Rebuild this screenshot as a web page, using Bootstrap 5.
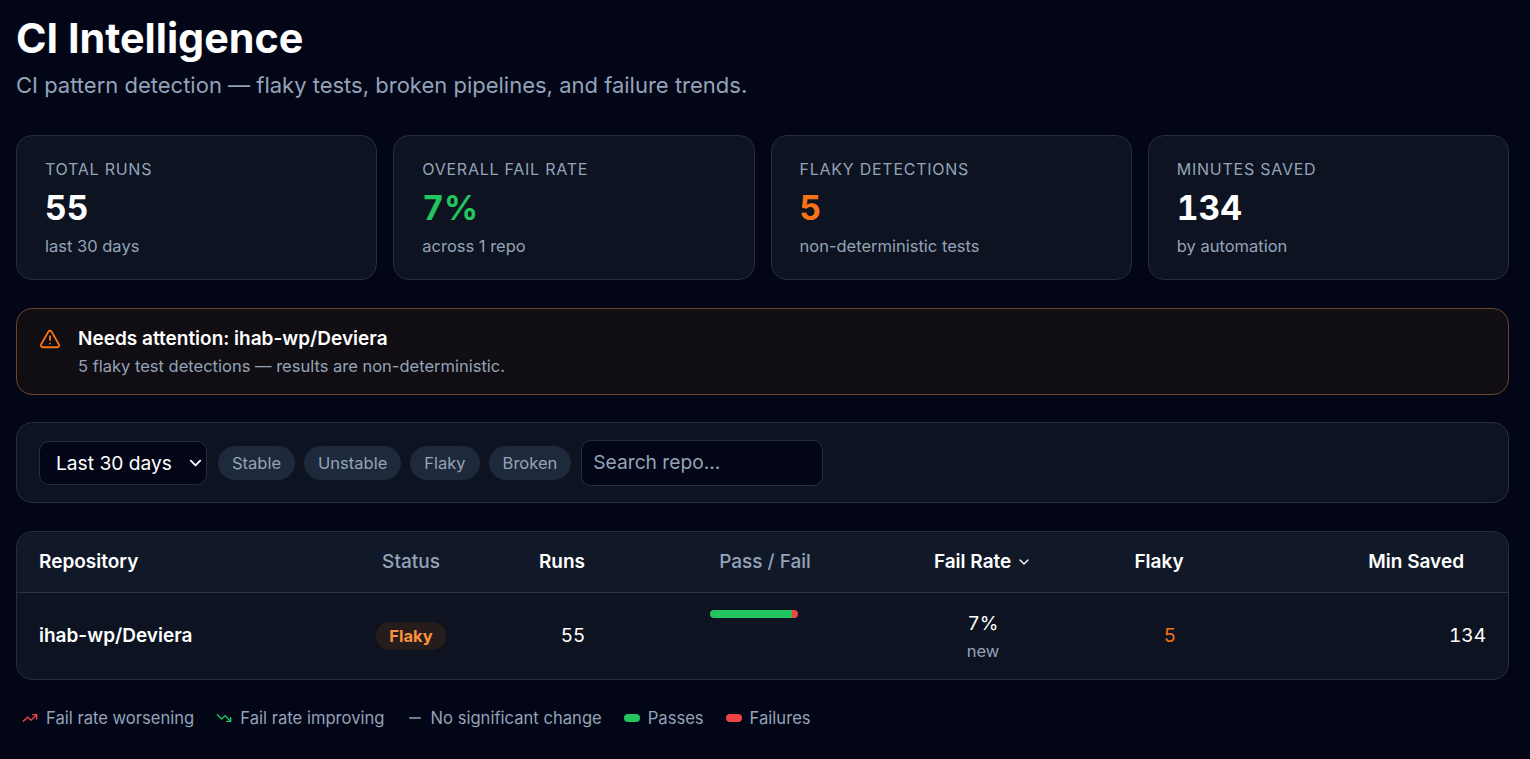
<!DOCTYPE html>
<html lang="en" data-bs-theme="dark">
<head>
  <meta charset="UTF-8" />
  <meta name="viewport" content="width=device-width, initial-scale=1" />
  <title>CI Intelligence</title>
  <link href="https://cdn.jsdelivr.net/npm/bootstrap@5.3.0/dist/css/bootstrap.min.css" rel="stylesheet" />
  <style>
    body { background: #020617; color: #fff; font-family: Inter, "Liberation Sans", sans-serif; overflow: hidden; }
    .page { padding: 16px 21px 0 16px; }
    .page-title { font-size: 41.3px; font-weight: 700; line-height: 44px; margin: 0 0 9px; }
    .page-sub { font-size: 22px; line-height: 32px; color: #94a3b8; margin: 0 0 34px; }
    .panel { background: #0d1321; border: 1px solid #252e3f; border-radius: 16px; }
    .stats { display: grid; grid-template-columns: repeat(4, 1fr); gap: 16px; margin-bottom: 28px; }
    .stat { padding: 23px 28px 22px; height: 145px; }
    .stat-label { font-size: 16px; line-height: 20px; letter-spacing: .75px; color: #94a3b8; text-transform: uppercase; }
    .stat-value { font-size: 33.6px; line-height: 44px; font-weight: 700; margin-top: 7px; font-variant-numeric: tabular-nums; }
    .stat-sub { font-size: 16.5px; line-height: 22px; color: #94a3b8; margin-top: 5px; }
    .text-good { color: #22c55e; }
    .text-warn { color: #f97316; }
    .attention { background: #110e13; border: 1px solid #6b4530; border-radius: 16px; padding: 17px 22px 16px; height: 87px; margin-bottom: 27px; gap: 17px; }
    .attention svg { margin-top: 2px; flex: none; }
    .attention-title { font-size: 19px; line-height: 26px; font-weight: 600; }
    .attention-sub { font-size: 16.5px; line-height: 24px; color: #94a3b8; margin-top: 2px; }
    .filters { height: 81px; padding: 0 22px; gap: 9px; margin-bottom: 28px; }
    .filters .form-select { width: 168px; height: 44px; background-color: #020617; border-color: #252e3f; border-radius: 10px; color: #fff; font-size: 19.2px; padding: 1px 30px 0 16px; margin-right: 2px;
      background-image: url("data:image/svg+xml,%3csvg xmlns='http://www.w3.org/2000/svg' viewBox='0 0 16 16'%3e%3cpath fill='none' stroke='%23fff' stroke-linecap='round' stroke-linejoin='round' stroke-width='2' d='m3 6 5 5 5-5'/%3e%3c/svg%3e"); background-position: right 3px center; background-size: 15px; }
    .chip { background: #1e293b; color: #94a3b8; border-radius: 17px; height: 34px; padding: 0 14px; font-size: 16.5px; line-height: 34px; border: 0; }
    .filters .form-control { width: 242px; height: 46px; background: #020617; border-color: #252e3f; border-radius: 10px; color: #fff; font-size: 19.2px; padding: 0 11px 2px; margin-left: 1px; }
    .filters .form-control::placeholder { color: #94a3b8; opacity: 1; }
    .repo-panel { overflow: hidden; margin-bottom: 28px; }
    .repo-table { table-layout: fixed; width: 100%; margin: 0; --bs-table-bg: transparent; --bs-table-color: #fff; --bs-table-border-color: transparent; }
    .repo-table th { background: #111827; height: 60px; padding: 0 22px; font-size: 19px; font-weight: 600; vertical-align: middle; border-bottom: 1px solid #2a3446; }
    .repo-table td { height: 87px; padding: 0 22px; font-size: 19px; vertical-align: middle; border: 0; }
    .repo-table td.num { font-variant-numeric: tabular-nums; }
    .repo-table th.muted { color: #94a3b8; font-weight: 500; }
    .sort-gap { padding-right: 22px; }
    .repo-name { font-weight: 600; }
    .pill-flaky { display: inline-block; background: #271c1c; color: #fb923c; border-radius: 14px; height: 28px; line-height: 28px; padding: 0 13.5px; font-size: 16.5px; font-weight: 700; }
    .bar-wrap { display: flex; justify-content: center; padding-right: 22px; }
    .bar { display: flex; width: 88px; height: 8px; border-radius: 4px; overflow: hidden; }
    .bar-pass { background: #22c55e; }
    .bar-fail { background: #ef4444; flex: 1; }
    td.bar-cell { vertical-align: top; padding-top: 17px; }
    .rate-sub { font-size: 16.5px; line-height: 22px; color: #94a3b8; margin-top: 1px; }
    .legend { font-size: 16.6px; line-height: 20px; color: #94a3b8; gap: 22px; padding-left: 6px; }
    .legend-dot { display: inline-block; width: 16px; height: 8px; border-radius: 4px; flex: none; }
  </style>
</head>
<body>

<div class="page">
  <h1 class="page-title">CI Intelligence</h1>
  <p class="page-sub">CI pattern detection — flaky tests, broken pipelines, and failure trends.</p>

  <div class="stats">
    <div class="panel stat">
      <div class="stat-label">Total Runs</div>
      <div class="stat-value">55</div>
      <div class="stat-sub">last 30 days</div>
    </div>
    <div class="panel stat">
      <div class="stat-label">Overall Fail Rate</div>
      <div class="stat-value text-good">7%</div>
      <div class="stat-sub">across 1 repo</div>
    </div>
    <div class="panel stat">
      <div class="stat-label">Flaky Detections</div>
      <div class="stat-value text-warn">5</div>
      <div class="stat-sub">non-deterministic tests</div>
    </div>
    <div class="panel stat">
      <div class="stat-label">Minutes Saved</div>
      <div class="stat-value">134</div>
      <div class="stat-sub">by automation</div>
    </div>
  </div>

  <div class="attention d-flex">
    <svg width="22" height="22" viewBox="0 0 24 24" fill="none" stroke="#f97316" stroke-width="2" stroke-linecap="round" stroke-linejoin="round">
      <path d="m21.73 18-8-14a2 2 0 0 0-3.48 0l-8 14A2 2 0 0 0 4 21h16a2 2 0 0 0 1.73-3Z"/>
      <path d="M12 9v4"/>
      <path d="M12 17h.01"/>
    </svg>
    <div>
      <div class="attention-title">Needs attention: ihab-wp/Deviera</div>
      <div class="attention-sub">5 flaky test detections — results are non-deterministic.</div>
    </div>
  </div>

  <div class="panel filters d-flex align-items-center">
    <select class="form-select">
      <option>Last 30 days</option>
    </select>
    <button class="chip">Stable</button>
    <button class="chip">Unstable</button>
    <button class="chip">Flaky</button>
    <button class="chip">Broken</button>
    <input class="form-control" type="text" placeholder="Search repo..." />
  </div>

  <div class="panel repo-panel">
    <table class="table repo-table">
      <colgroup>
        <col style="width: 313px" />
        <col style="width: 162px" />
        <col style="width: 162px" />
        <col style="width: 222px" />
        <col style="width: 214px" />
        <col style="width: 160px" />
        <col />
      </colgroup>
      <thead>
        <tr>
          <th>Repository</th>
          <th class="text-center muted">Status</th>
          <th class="text-center"><span class="sort-gap">Runs</span></th>
          <th class="text-center muted">Pass / Fail</th>
          <th class="text-center">
            Fail Rate
            <svg width="16" height="16" viewBox="0 0 24 24" fill="none" stroke="#fff" stroke-width="2" stroke-linecap="round" stroke-linejoin="round"><path d="m6 9 6 6 6-6"/></svg>
          </th>
          <th class="text-center"><span class="sort-gap">Flaky</span></th>
          <th class="text-end"><span class="sort-gap">Min Saved</span></th>
        </tr>
      </thead>
      <tbody>
        <tr>
          <td class="repo-name">ihab-wp/Deviera</td>
          <td class="text-center"><span class="pill-flaky">Flaky</span></td>
          <td class="text-center num">55</td>
          <td class="bar-cell">
            <div class="bar-wrap">
              <div class="bar">
                <div class="bar-pass" style="width: 93%"></div>
                <div class="bar-fail"></div>
              </div>
            </div>
          </td>
          <td class="text-center num">
            <div>7%</div>
            <div class="rate-sub">new</div>
          </td>
          <td class="text-center text-warn num">5</td>
          <td class="text-end num">134</td>
        </tr>
      </tbody>
    </table>
  </div>

  <div class="legend d-flex align-items-center">
    <span class="d-flex align-items-center gap-2">
      <svg width="16" height="16" viewBox="0 0 24 24" fill="none" stroke="#ef4444" stroke-width="2" stroke-linecap="round" stroke-linejoin="round"><path d="M22 7 13.5 15.5 8.5 10.5 2 17"/><path d="M16 7h6v6"/></svg>
      Fail rate worsening
    </span>
    <span class="d-flex align-items-center gap-2">
      <svg width="16" height="16" viewBox="0 0 24 24" fill="none" stroke="#22c55e" stroke-width="2" stroke-linecap="round" stroke-linejoin="round"><path d="M22 17 13.5 8.5 8.5 13.5 2 7"/><path d="M16 17h6v-6"/></svg>
      Fail rate improving
    </span>
    <span class="d-flex align-items-center gap-2">
      <svg width="16" height="16" viewBox="0 0 24 24" fill="none" stroke="#94a3b8" stroke-width="2" stroke-linecap="round" stroke-linejoin="round"><path d="M4 12h16"/></svg>
      No significant change
    </span>
    <span class="d-flex align-items-center gap-2"><span class="legend-dot bar-pass"></span>Passes</span>
    <span class="d-flex align-items-center gap-2"><span class="legend-dot bar-fail"></span>Failures</span>
  </div>
</div>

<script src="https://cdn.jsdelivr.net/npm/bootstrap@5.3.0/dist/js/bootstrap.bundle.min.js"></script>
</body>
</html>
